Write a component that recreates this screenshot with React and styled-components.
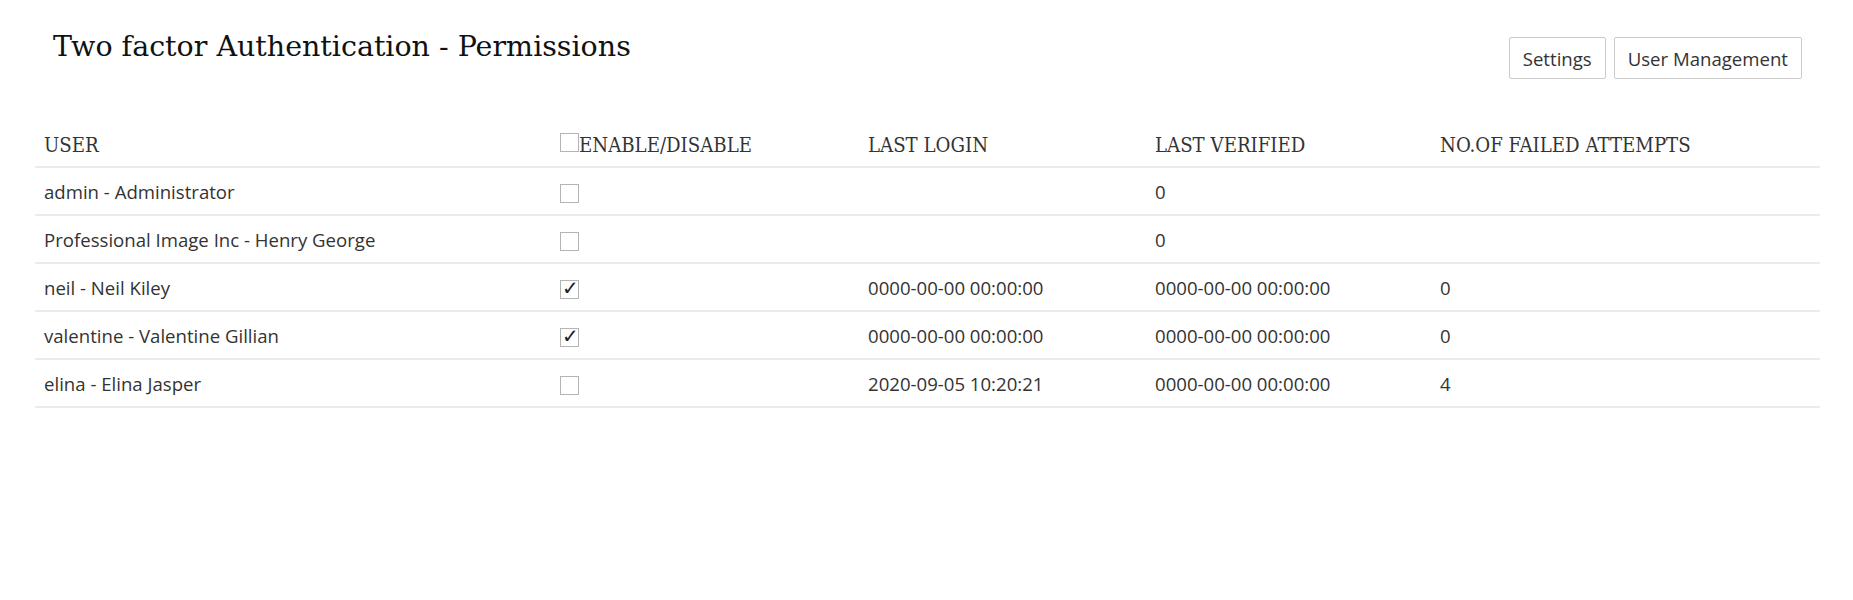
import React from 'react';
import styled, { createGlobalStyle } from 'styled-components';

const GlobalStyle = createGlobalStyle`
    body {
        margin: 0;
        background: #ffffff;
        font-family: "Open Sans", "Liberation Sans", sans-serif;
        color: #333333;
    }
`

const Page = styled.div`
    padding: 0 33px 0 35px;
`

const TopBar = styled.div`
    display: flex;
    justify-content: space-between;
    align-items: flex-start;
    padding: 0 18px;
`

const Title = styled.h1`
    margin: 30px 0 0 0;
    font-family: "DejaVu Serif", "Liberation Serif", serif;
    font-weight: normal;
    font-size: 28.5px;
    line-height: 34px;
    color: #111111;
`

const Actions = styled.div`
    display: flex;
    gap: 8px;
    margin-top: 37px;
`

const Button = styled.button`
    height: 42px;
    padding: 0 13px;
    background: #ffffff;
    border: 1px solid #cccccc;
    border-radius: 2px;
    font-family: "Open Sans", "Liberation Sans", sans-serif;
    font-size: 18.6px;
    color: #333333;
    cursor: pointer;
`

const Table = styled.table`
    width: 100%;
    margin-top: 54px;
    border-collapse: collapse;
    table-layout: fixed;
`

const Th = styled.th`
    text-align: left;
    padding: 0 9px 9px 9px;
    font-family: "DejaVu Serif", "Liberation Serif", serif;
    font-stretch: condensed;
    font-weight: normal;
    font-size: 20.2px;
    color: #333333;
    text-transform: uppercase;
    white-space: nowrap;
`

const HeadRow = styled.tr`
    border-bottom: 2px solid #ebebeb;
`

const Tr = styled.tr`
    height: 48px;
    border-bottom: 2px solid #ebebeb;
`

const Td = styled.td`
    padding: 0 9px;
    font-size: 18.6px;
    color: #333333;
    vertical-align: middle;
    white-space: nowrap;
`

const Check = styled.input.attrs({ type: 'checkbox' })`
    appearance: none;
    -webkit-appearance: none;
    box-sizing: border-box;
    width: 19px;
    height: 19px;
    margin: 0;
    border: 1px solid #b4b4b4;
    background: #ffffff;
    position: relative;
    vertical-align: ${props => props.$head ? 'baseline' : 'middle'};
    &:checked::after {
        content: '✓';
        position: absolute;
        left: 1px;
        top: -5px;
        font-family: "DejaVu Sans", sans-serif;
        font-size: 20px;
        font-weight: bold;
        color: #1e1e1e;
    }
`

const users = [
    { name: 'admin - Administrator', enabled: false, lastLogin: '', lastVerified: '0', failed: '' },
    { name: 'Professional Image Inc - Henry George', enabled: false, lastLogin: '', lastVerified: '0', failed: '' },
    { name: 'neil - Neil Kiley', enabled: true, lastLogin: '0000-00-00 00:00:00', lastVerified: '0000-00-00 00:00:00', failed: '0' },
    { name: 'valentine - Valentine Gillian', enabled: true, lastLogin: '0000-00-00 00:00:00', lastVerified: '0000-00-00 00:00:00', failed: '0' },
    { name: 'elina - Elina Jasper', enabled: false, lastLogin: '2020-09-05 10:20:21', lastVerified: '0000-00-00 00:00:00', failed: '4' },
];

export default function App() {
    return (
        <Page>
            <GlobalStyle />
            <TopBar>
                <Title>Two factor Authentication - Permissions</Title>
                <Actions>
                    <Button>Settings</Button>
                    <Button>User Management</Button>
                </Actions>
            </TopBar>
            <Table>
                <colgroup>
                    <col style={{ width: '516px' }} />
                    <col style={{ width: '308px' }} />
                    <col style={{ width: '287px' }} />
                    <col style={{ width: '285px' }} />
                    <col />
                </colgroup>
                <thead>
                    <HeadRow>
                        <Th>User</Th>
                        <Th><Check $head readOnly />Enable/Disable</Th>
                        <Th>Last Login</Th>
                        <Th>Last Verified</Th>
                        <Th>No.of Failed Attempts</Th>
                    </HeadRow>
                </thead>
                <tbody>
                    {users.map((user, index) =>
                        <Tr key={index}>
                            <Td>{user.name}</Td>
                            <Td><Check defaultChecked={user.enabled} /></Td>
                            <Td>{user.lastLogin}</Td>
                            <Td>{user.lastVerified}</Td>
                            <Td>{user.failed}</Td>
                        </Tr>)}
                </tbody>
            </Table>
        </Page>
    );
}
